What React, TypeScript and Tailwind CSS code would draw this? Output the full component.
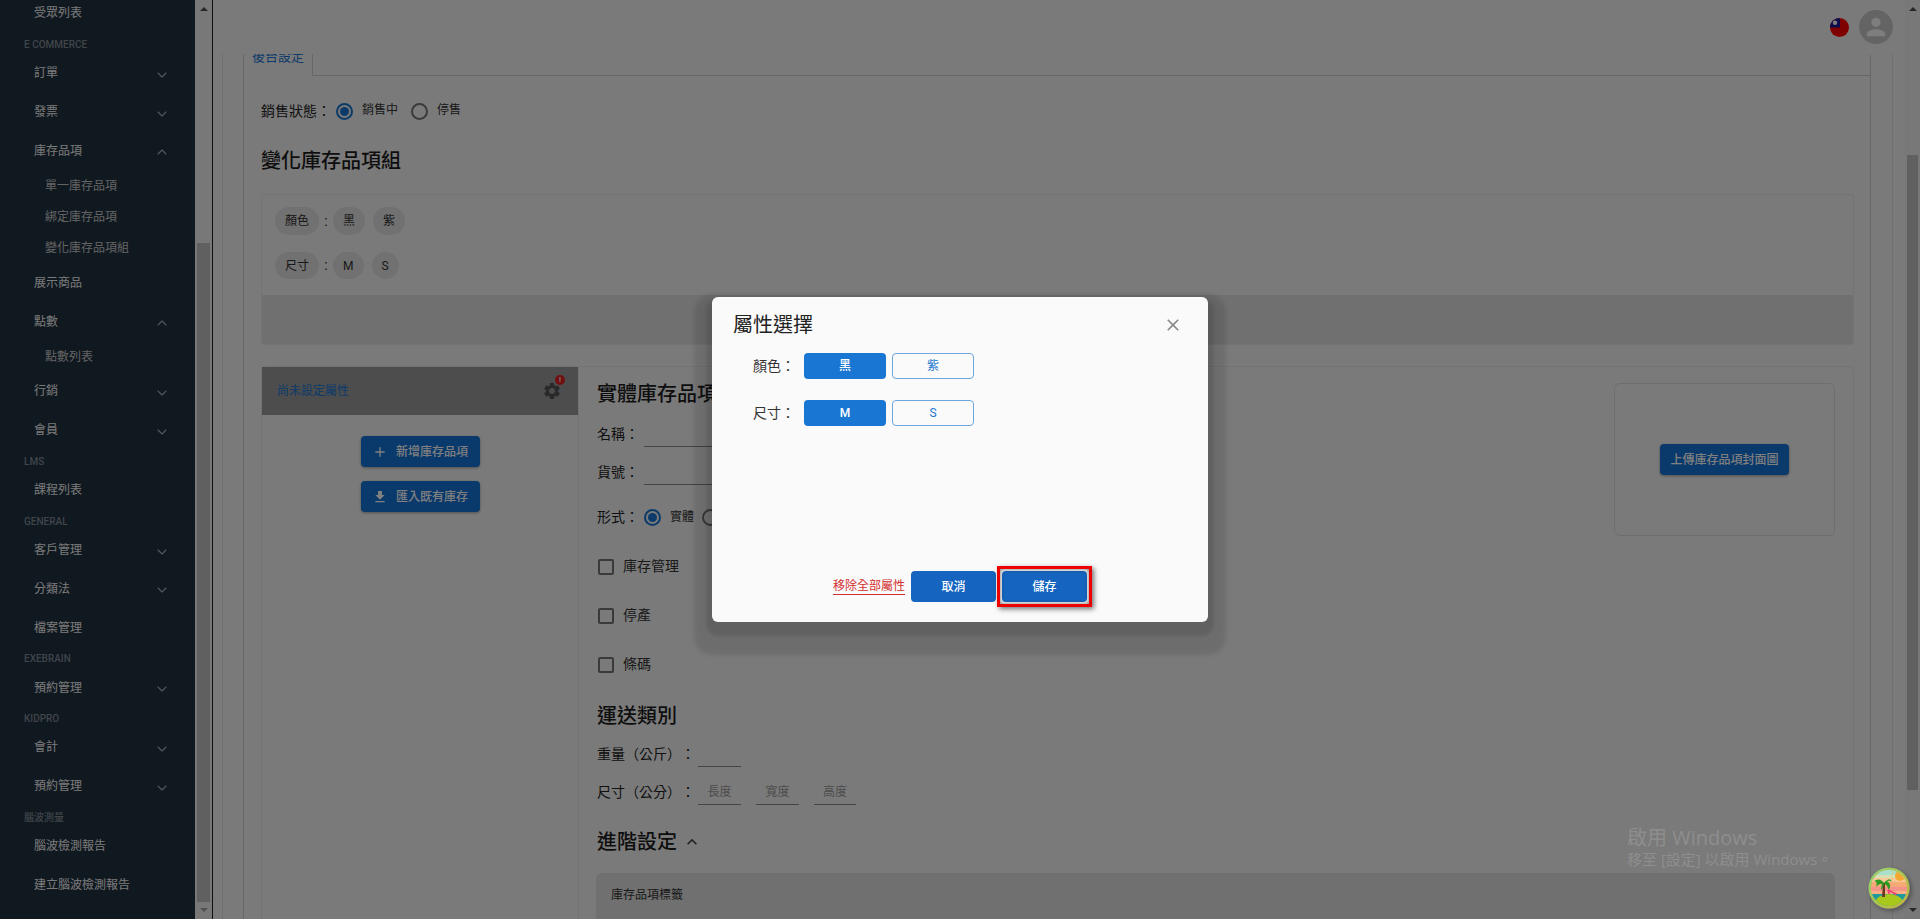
import { ChevronDown, ChevronUp } from "lucide-react";
import { MdAdd, MdClose, MdExpandLess, MdFileDownload, MdPerson, MdSettings } from "react-icons/md";

type NavItem = { label: string; type: "item" | "sub" | "head"; arrow?: "up" | "down" };

const navItems: NavItem[] = [
  { label: "受眾列表", type: "item" },
  { label: "E COMMERCE", type: "head" },
  { label: "訂單", type: "item", arrow: "down" },
  { label: "發票", type: "item", arrow: "down" },
  { label: "庫存品項", type: "item", arrow: "up" },
  { label: "單一庫存品項", type: "sub" },
  { label: "綁定庫存品項", type: "sub" },
  { label: "變化庫存品項組", type: "sub" },
  { label: "展示商品", type: "item" },
  { label: "點數", type: "item", arrow: "up" },
  { label: "點數列表", type: "sub" },
  { label: "行銷", type: "item", arrow: "down" },
  { label: "會員", type: "item", arrow: "down" },
  { label: "LMS", type: "head" },
  { label: "課程列表", type: "item" },
  { label: "GENERAL", type: "head" },
  { label: "客戶管理", type: "item", arrow: "down" },
  { label: "分類法", type: "item", arrow: "down" },
  { label: "檔案管理", type: "item" },
  { label: "EXEBRAIN", type: "head" },
  { label: "預約管理", type: "item", arrow: "down" },
  { label: "KIDPRO", type: "head" },
  { label: "會計", type: "item", arrow: "down" },
  { label: "預約管理", type: "item", arrow: "down" },
  { label: "腦波測量", type: "head" },
  { label: "腦波檢測報告", type: "item" },
  { label: "建立腦波檢測報告", type: "item" },
];

const Sidebar = () => (
  <aside className="w-[195px] h-full shrink-0 overflow-hidden bg-[#203040]">
    <div className="-mt-[6px]">
      {navItems.map((item, index) => {
        if (item.type === "head") {
          return (
            <div key={index} className="h-[21px] pl-[24px] pt-[3px] text-[10px] leading-[18px] font-medium text-[#7f8a93]">
              {item.label}
            </div>
          );
        }
        if (item.type === "sub") {
          return (
            <div key={index} className="h-[31px] pl-[45px] flex items-center text-[12px] text-[#c8c8c8]">
              {item.label}
            </div>
          );
        }
        return (
          <div key={index} className="h-[38.85px] pl-[34px] pr-[25px] flex items-center justify-between text-[12px] text-[#f4f4f4]">
            <span>{item.label}</span>
            {item.arrow === "down" && <ChevronDown size={16} strokeWidth={1.6} className="text-[#a8b0b8] mt-[3px]" />}
            {item.arrow === "up" && <ChevronUp size={16} strokeWidth={1.6} className="text-[#a8b0b8] mt-[3px]" />}
          </div>
        );
      })}
    </div>
  </aside>
);

const ScrollBar = ({ thumbTop, thumbHeight, downColor }: { thumbTop: string; thumbHeight: string; downColor: string }) => (
  <div className="h-full w-full bg-[#f1f1f1] flex flex-col items-center relative">
    <div className="mt-[7px] w-0 h-0 border-x-[4px] border-x-transparent border-b-[4px] border-b-[#505050]" />
    <div className={`absolute left-[2px] right-[2px] bg-[#c1c1c1] ${thumbTop} ${thumbHeight}`} />
    <div className={`mt-auto mb-[7px] w-0 h-0 border-x-[4px] border-x-transparent border-t-[4px] ${downColor}`} />
  </div>
);

const Radio = ({ on }: { on?: boolean }) => (
  <span className={`w-[17px] h-[17px] rounded-full border-2 flex items-center justify-center shrink-0 ${on ? "border-[#1976d2]" : "border-[#757575]"}`}>
    {on && <span className="w-[9px] h-[9px] rounded-full bg-[#1976d2]" />}
  </span>
);

const Chip = ({ label }: { label: string }) => (
  <span className="h-full px-[10px] rounded-full bg-[#e2e2e2] flex items-center text-[12px] text-[#333]">{label}</span>
);

const ChipRow = ({ name, values, height }: { name: string; values: string[]; height: string }) => (
  <div className={`flex items-center ${height}`}>
    <Chip label={name} />
    <span className="w-[14px] text-center text-[14px] text-[#222]">:</span>
    <div className="flex gap-[8px] h-full">
      {values.map((value) => (
        <Chip key={value} label={value} />
      ))}
    </div>
  </div>
);

const Check = ({ label }: { label: string }) => (
  <div className="h-[49px] flex items-center text-[14px] text-[#333]">
    <span className="w-[16px] h-[16px] ml-px rounded-[2px] border-2 border-[#757575] mr-[9px]" />
    {label}
  </div>
);

const FieldRow = ({ label, children }: { label: string; children: React.ReactNode }) => (
  <div className="h-[38px] flex items-end text-[14px] text-[#222]">
    <span className="h-[26px] flex items-center whitespace-nowrap">{label}</span>
    {children}
  </div>
);

const Underline = ({ width, hint }: { width: string; hint?: string }) => (
  <span className={`h-[26px] border-b border-[#8a8a8a] flex items-center justify-center text-[12px] text-[#9a9a9a] ${width}`}>{hint}</span>
);

const ActionButton = ({ icon, label }: { icon?: React.ReactNode; label: string }) => (
  <button className="h-[31px] px-[10px] rounded-[4px] bg-[#1572d8] text-white text-[12px] font-medium whitespace-nowrap flex items-center justify-center shadow-[0_1px_3px_rgba(0,0,0,0.35)]">
    {icon && <span className="w-[16px] mr-[8px] flex justify-center text-[16px]">{icon}</span>}
    {label}
  </button>
);

const PageContent = () => (
  <div className="h-full ml-[9px] mr-[12px] pl-[20px] pr-[21px] border-x border-[#e0e0e0] overflow-hidden">
    {/* Tabs */}
    <div className="h-[22px] flex border-l border-[#cfcfcf]">
      <div className="w-[69px] border-r border-[#cfcfcf] pl-[8px] -mt-[5px] text-[13px] leading-[16px] text-[#1976d2] shrink-0">後台設定</div>
      <div className="flex-1 border-b border-r border-[#cfcfcf] rounded-tr-[4px]" />
    </div>

    {/* Panel */}
    <div className="border-x border-[#cfcfcf] pl-[17px] pr-[16px] pt-[23px] pb-[40px]">
      <div className="h-[24px] flex items-center text-[12px] text-[#333]">
        <span className="text-[14px] text-[#222] w-[74px]">銷售狀態：</span>
        <span className="ml-[1px]"><Radio on /></span>
        <span className="ml-[9px] mb-[2px]">銷售中</span>
        <span className="ml-[13px]"><Radio /></span>
        <span className="ml-[9px] mb-[2px]">停售</span>
      </div>
      <h2 className="mt-[24px] h-[28px] text-[20px] leading-[28px] font-medium text-[#1c1c1c]">變化庫存品項組</h2>

      {/* Attribute summary */}
      <div className="mt-[19px] h-[151px] border border-[#e6e6e6] rounded-[4px] flex flex-col overflow-hidden">
        <div className="pl-[13px] pt-[12px] flex flex-col gap-[17px]">
          <ChipRow name="顏色" values={["黑", "紫"]} height="h-[28px]" />
          <ChipRow name="尺寸" values={["M", "S"]} height="h-[27px]" />
        </div>
        <div className="mt-auto h-[49px] bg-[#e0e0e0]" />
      </div>

      {/* Variation editor */}
      <div className="mt-[21px] border border-[#e6e6e6] rounded-t-[4px] flex">
        <div className="w-[317px] h-[600px] border-r border-[#e6e6e6] shrink-0 flex flex-col items-center">
          <div className="w-full h-[48px] bg-[#9a9a9a] pl-[15px] pr-[16px] flex items-center justify-between">
            <span className="text-[12px] text-[#1976d2]">尚未設定屬性</span>
            <span className="relative flex">
              <MdSettings className="text-[20px] text-[#555]" />
              <span className="absolute -top-[6px] -right-[3px] w-[10px] h-[10px] rounded-full bg-[#e02020] text-white text-[7px] leading-[10px] text-center font-bold">!</span>
            </span>
          </div>
          <div className="mt-[21px] w-[119px] flex flex-col gap-[14px]">
            <ActionButton icon={<MdAdd />} label="新增庫存品項" />
            <ActionButton icon={<MdFileDownload />} label="匯入既有庫存" />
          </div>
        </div>

        <div className="flex-1 pl-[18px] pr-[18px]">
          <div className="flex justify-between">
            <div className="w-[400px]">
              <h3 className="mt-[13px] mb-[1px] h-[28px] text-[20px] leading-[28px] font-medium text-[#1c1c1c]">實體庫存品項</h3>
              <FieldRow label="名稱：">
                <span className="ml-[5px]"><Underline width="w-[200px]" /></span>
              </FieldRow>
              <FieldRow label="貨號：">
                <span className="ml-[5px]"><Underline width="w-[200px]" /></span>
              </FieldRow>
              <div className="h-[32px] mt-[16px] flex items-center text-[14px] text-[#222]">
                <span className="w-[47px]">形式：</span>
                <Radio on />
                <span className="ml-[9px] text-[12px] text-[#333]">實體</span>
                <span className="ml-[8px]"><Radio /></span>
              </div>
              <div className="mt-[9px]">
                <Check label="庫存管理" />
                <Check label="停產" />
                <Check label="條碼" />
              </div>
              <h3 className="mt-[14px] h-[26px] text-[20px] leading-[26px] font-medium text-[#1c1c1c]">運送類別</h3>
              <FieldRow label="重量（公斤）：">
                <span className="ml-[3px]"><Underline width="w-[43px]" /></span>
              </FieldRow>
              <FieldRow label="尺寸（公分）：">
                <span className="ml-[3px] flex gap-[15px]">
                  <Underline width="w-[43px]" hint="長度" />
                  <Underline width="w-[43px]" hint="寬度" />
                  <Underline width="w-[42px]" hint="高度" />
                </span>
              </FieldRow>
            </div>
            <div className="mt-[16px] w-[221px] h-[153px] border border-[#dcdcdc] rounded-[6px] flex items-center justify-center">
              <ActionButton label="上傳庫存品項封面圖" />
            </div>
          </div>
          <div className="mt-[23px] h-[28px] flex items-center">
            <h3 className="text-[20px] leading-[28px] font-medium text-[#1c1c1c]">進階設定</h3>
            <MdExpandLess className="ml-[5px] text-[20px] text-[#444]" />
          </div>
          <div className="mt-[17px] -ml-px h-[120px] rounded-[6px] bg-[#e0e0e0] pl-[15px] pt-[15px] text-[12px] leading-[14px] text-[#333]">
            庫存品項標籤
          </div>
        </div>
      </div>
    </div>
  </div>
);

const Modal = () => (
  <div className="w-[496px] h-[325px] rounded-[6px] bg-[#fafafa] flex flex-col shadow-[0_8px_3px_6px_rgba(0,0,0,0.1),0_15px_4px_18px_rgba(0,0,0,0.1)]">
    <div className="pl-[21px] pr-[25px] pt-[12px] h-[44px] flex items-center justify-between">
      <h2 className="text-[20px] font-normal text-[#222]">屬性選擇</h2>
      <MdClose className="text-[20px] text-[#8a8a8a]" />
    </div>
    <div className="pl-[41px] pt-[12px] flex flex-col gap-[21px]">
      {[
        { name: "顏色：", values: ["黑", "紫"] },
        { name: "尺寸：", values: ["M", "S"] },
      ].map((row) => (
        <div key={row.name} className="flex items-center h-[26px]">
          <span className="w-[51px] text-[14px] text-[#333]">{row.name}</span>
          <div className="flex gap-[6px]">
            <button className="w-[82px] h-[26px] rounded-[4px] bg-[#1976d2] text-white text-[12px] font-medium">{row.values[0]}</button>
            <button className="w-[82px] h-[26px] rounded-[4px] border border-[#6ea6e0] text-[#1976d2] text-[12px]">{row.values[1]}</button>
          </div>
        </div>
      ))}
    </div>
    <div className="mt-auto mb-[20px] flex justify-center items-center">
      <a className="mr-[6px] text-[12px] leading-[14px] text-[#d32f2f] border-b border-[#d32f2f] pb-px">移除全部屬性</a>
      <button className="w-[85px] h-[31px] rounded-[4px] bg-[#1565c0] text-white text-[12px] font-medium">取消</button>
      <div className="relative ml-[6px]">
        <button className="w-[85px] h-[31px] rounded-[4px] bg-[#1565c0] text-white text-[12px] font-medium">儲存</button>
        <div className="absolute -inset-x-[5px] -inset-y-[5px] border-[3px] border-[#ee0000] shadow-[2px_2px_5px_rgba(0,0,0,0.55),inset_0_0_4px_rgba(0,0,0,0.6)]" />
      </div>
    </div>
  </div>
);

const FlagIcon = () => (
  <svg width="19" height="19" viewBox="0 0 19 19" className="rounded-full">
    <rect width="19" height="19" fill="#ff0000" />
    <rect width="10" height="9.5" fill="#1a1a9a" />
    <circle cx="5" cy="4.8" r="2.2" fill="#ffffff" />
  </svg>
);

const IslandBadge = () => (
  <svg width="42" height="42" viewBox="0 0 42 42">
    <defs>
      <clipPath id="inner">
        <circle cx="21" cy="21" r="18" />
      </clipPath>
      <linearGradient id="ring" x1="0" y1="0" x2="1" y2="1">
        <stop offset="0" stopColor="#8fd07a" />
        <stop offset="0.5" stopColor="#a8c850" />
        <stop offset="1" stopColor="#c8b040" />
      </linearGradient>
    </defs>
    <circle cx="21" cy="21" r="20.5" fill="url(#ring)" />
    <g clipPath="url(#inner)">
      <rect width="42" height="42" fill="#f6a878" />
      <rect y="2" width="42" height="6" fill="#a8e0cc" />
      <rect y="8" width="42" height="3" fill="#d8e0b0" />
      <rect y="11" width="42" height="4" fill="#f8c898" />
      <rect y="20" width="42" height="4" fill="#f49488" />
      <rect y="24" width="42" height="4" fill="#f8b088" />
      <circle cx="32" cy="9" r="5" fill="#f4a830" />
      <circle cx="32" cy="9" r="8" fill="none" stroke="#f4c060" strokeWidth="1" strokeDasharray="1.5 1.5" />
      <rect y="27" width="42" height="15" fill="#1e9a9a" />
      <path d="M20 23 L22 29 M20 23 L28 27 L26 29" fill="none" stroke="#e8407a" strokeWidth="1.6" />
      <ellipse cx="21" cy="36" rx="14" ry="9" fill="#a8c81c" />
      <path d="M11 38 Q21 43 31 38 L31 42 L11 42 Z" fill="#6a9a18" />
      <path d="M14 30 L15 16 L17 16 L17 30 Z" fill="#6a3a20" />
      <path d="M16 16 Q12 10 6 14 Q10 14 8 20 Q12 16 14 17 Q13 20 13 23 Q16 20 16 16 Q20 19 21 23 Q24 17 19 14 Q22 13 24 15 Q22 9 16 16 Z" fill="#2a9a20" />
    </g>
  </svg>
);

export default function App() {
  return (
    <div className="relative w-[1920px] h-[919px] overflow-hidden flex bg-[#f5f5f5] font-['Roboto','Noto_Sans_CJK_TC',sans-serif] [text-spacing-trim:space-all]">
      <Sidebar />
      <div className="w-[18px] h-full shrink-0 border-r border-[#16202a]">
        <ScrollBar thumbTop="top-[243px]" thumbHeight="h-[659px]" downColor="border-t-[#a3a3a3]" />
      </div>

      <main className="flex-1 min-w-0 h-full flex flex-col">
        <header className="h-[54px] shrink-0 flex items-center justify-end gap-[10px] pr-[12px]">
          <FlagIcon />
          <span className="w-[34px] h-[34px] rounded-full bg-[#c8c8c8] flex items-center justify-center">
            <MdPerson className="text-[28px] text-[#fafafa]" />
          </span>
        </header>
        <div className="flex-1 min-h-0">
          <PageContent />
        </div>
      </main>

      <div className="w-[15px] h-full shrink-0">
        <ScrollBar thumbTop="top-[155px]" thumbHeight="h-[635px]" downColor="border-t-[#505050]" />
      </div>

      {/* Dialog backdrop */}
      <div className="absolute inset-0 bg-black/50" />
      <div className="absolute inset-0 flex items-center justify-center">
        <Modal />
      </div>

      {/* Windows watermark */}
      <div className="absolute left-[1627px] top-[825px] text-[#8e8e8e] font-['Open_Sans','Noto_Sans_CJK_TC',sans-serif]">
        <div className="text-[20px] leading-[25px]">啟用 Windows</div>
        <div className="text-[15px] leading-[19px]">移至 [設定] 以啟用 Windows。</div>
      </div>

      {/* Floating badge */}
      <div className="absolute left-[1868px] top-[867px] rounded-full shadow-[2px_2px_4px_rgba(0,0,0,0.3)]">
        <IslandBadge />
      </div>
    </div>
  );
}
